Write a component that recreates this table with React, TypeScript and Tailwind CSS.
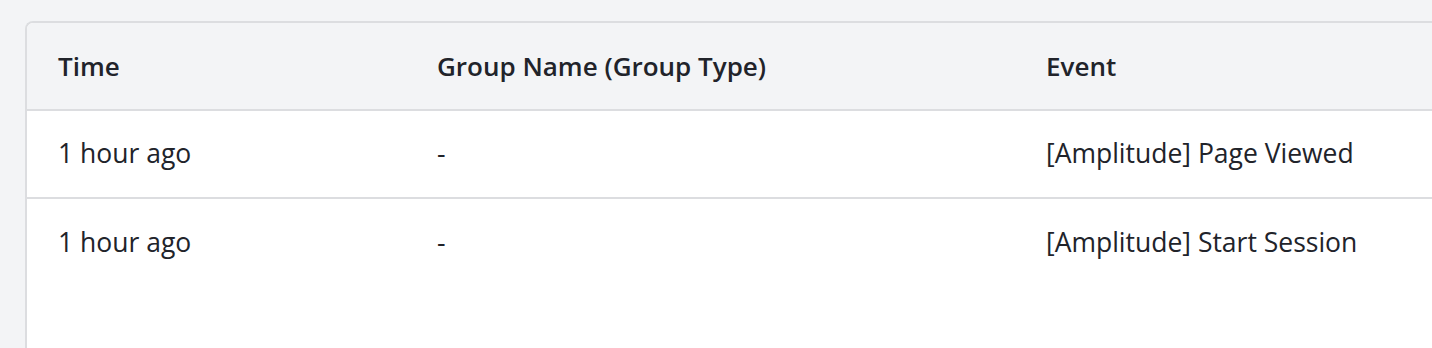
const rows = [
  { time: '1 hour ago', group: '-', event: '[Amplitude] Page Viewed' },
  { time: '1 hour ago', group: '-', event: '[Amplitude] Start Session' },
];

export default function App() {
  return (
    <div
      className="h-[348px] w-[1432px] overflow-hidden bg-[#f3f4f6] pl-[25px] pt-[21px] text-[#21232a]"
      style={{ fontFamily: '"Open Sans", "Noto Sans", sans-serif' }}
    >
      <div className="h-[400px] w-[1500px] rounded-tl-[8px] border-l-2 border-t-2 border-[#dcdde0] bg-white">
        <div className="grid h-[88px] grid-cols-[379px_609px_1fr] items-center rounded-tl-[6px] border-b-2 border-[#dcdde0] bg-[#f3f4f6] pl-[31px] text-[26px] font-semibold">
          <div>Time</div>
          <div>Group Name (Group Type)</div>
          <div>Event</div>
        </div>
        {rows.map((r, i) => (
          <div
            key={i}
            className="grid h-[88px] grid-cols-[379px_609px_1fr] items-center border-b-2 border-[#dcdde0] pl-[31px] text-[26.5px] last:border-b-0"
          >
            <div>{r.time}</div>
            <div>{r.group}</div>
            <div>{r.event}</div>
          </div>
        ))}
      </div>
    </div>
  );
}
